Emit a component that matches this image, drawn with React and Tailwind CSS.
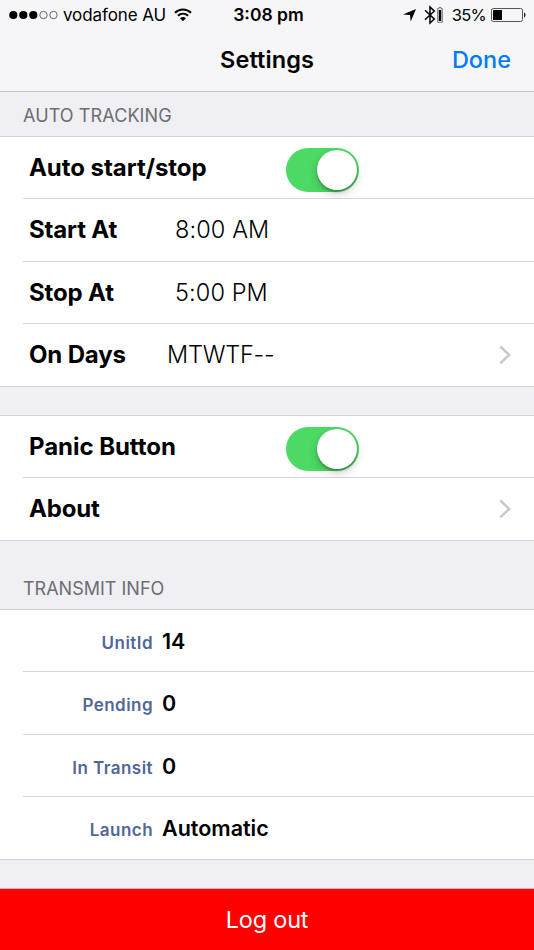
import React, { useState } from 'react';

/**
 * Status bar with carrier, clock and battery indicators.
 * @returns {JSX.Element}
 */
function StatusBar() {
  return (
    <div className="grid h-[30px] grid-cols-[1fr_auto_1fr] items-center pl-[9px] pr-[8px] text-[17px] leading-none text-black">
      <div className="flex items-center">
        <svg width="49" height="10" viewBox="0 0 49 10" fill="#000">
          <circle cx="4.3" cy="5" r="4.1" />
          <circle cx="14.3" cy="5" r="4.1" />
          <circle cx="24.3" cy="5" r="4.1" />
          <circle cx="34.5" cy="5" r="3.7" fill="none" stroke="#444" strokeWidth="0.8" />
          <circle cx="44.5" cy="5" r="3.7" fill="none" stroke="#444" strokeWidth="0.8" />
        </svg>
        <span className="ml-[5px] whitespace-nowrap tracking-[-0.1px]">vodafone AU</span>
        <svg className="ml-[8px]" width="18" height="14" viewBox="0 0 18 14" fill="none" stroke="#000" strokeWidth="2.1">
          <path d="M1 4.8 C5.6 0.4 12.4 0.4 17 4.8" />
          <path d="M3.9 7.8 C6.9 5 11.1 5 14.1 7.8" />
          <path d="M9 13.2 L6 10.3 C7.7 8.7 10.3 8.7 12 10.3 Z" fill="#000" stroke="none" />
        </svg>
      </div>
      <span className="pl-[2px] text-[17.5px] font-semibold">3:08 pm</span>
      <div className="flex items-center justify-end">
        <svg width="13" height="13" viewBox="0 0 13 13" fill="#000">
          <path d="M13 0 L7.7 12.6 L7 6 L0 5.4 Z" />
        </svg>
        <svg className="ml-[8px]" width="12" height="20" viewBox="0 0 12 20" fill="none" stroke="#000" strokeWidth="1.5">
          <path d="M1 5.2 L10.3 14 L6 18 V2 L10.3 6 L1 14.8" />
        </svg>
        <svg className="ml-[1px]" width="6" height="16" viewBox="0 0 6 16">
          <path d="M1.9 0.5 H4.1 V1.5 H5.4 V15.3 H0.6 V1.5 H1.9 Z" fill="#ddd" stroke="#777" strokeWidth="0.9" />
          <rect x="1.8" y="3" width="2.4" height="11" fill="#000" />
        </svg>
        <span className="ml-[9px] text-[16.5px] tracking-[-0.7px]">35%</span>
        <svg className="ml-[5px]" width="35" height="14" viewBox="0 0 35 14">
          <rect x="0.5" y="0.5" width="31" height="13" rx="1.8" fill="none" stroke="#555" />
          <rect x="2" y="2" width="9" height="10" fill="#000" />
          <path d="M33 4.5 C35 5 35 9 33 9.5 Z" fill="#222" />
        </svg>
      </div>
    </div>
  );
}

function Switch({ checked, onChange, label }) {
  return (
    <button
      type="button"
      role="switch"
      aria-checked={checked}
      aria-label={label}
      onClick={() => onChange(!checked)}
      className={`flex h-[44px] w-[73px] items-center rounded-full p-[2px] ${
        checked ? 'justify-end bg-[#4cd964]' : 'justify-start bg-[#e5e5ea]'
      }`}
    >
      <span className="size-[40px] rounded-full bg-white shadow-[0_4px_10px_rgba(0,0,0,0.18),0_2px_2px_rgba(0,0,0,0.25)]" />
    </button>
  );
}

function Chevron() {
  return (
    <svg width="12" height="20" viewBox="0 0 12 20" fill="none" stroke="#c7c7cc" strokeWidth="2.4">
      <path d="M1.2 1.5 L10.2 9.9 L1.2 18.3" />
    </svg>
  );
}

/**
 * Table row. The separator starts at the inset unless the row closes its group.
 * @param {{ tall: boolean, last: boolean, children: React.ReactNode }} props
 * @returns {JSX.Element}
 */
function Row({ tall, last, children }) {
  return (
    <div className={`bg-white ${last ? 'border-b border-[#d2d2d6]' : 'pl-[23px]'}`}>
      <div
        className={`flex items-center ${tall && !last ? 'h-[63px]' : 'h-[62px]'} ${
          last ? 'pb-[1px] pl-[23px]' : 'border-b border-[#d6d6d9]'
        }`}
      >
        {children}
      </div>
    </div>
  );
}

function SwitchRow({ label, checked, onChange }) {
  return (
    <Row>
      <span className="w-[257px] pl-[6px] text-[24px] font-bold tracking-[-0.05px]">{label}</span>
      <div className="ml-[6px] pt-[5px]">
        <Switch checked={checked} onChange={onChange} label={label} />
      </div>
    </Row>
  );
}

function SettingRow({ label, value, valueClass, tall, last, chevron }) {
  return (
    <Row tall={tall} last={last}>
      <div className={`flex flex-1 items-center ${last ? 'pt-[1px]' : ''}`}>
        <span className="w-[138px] pl-[6px] text-[24px] font-bold tracking-[-0.15px]">{label}</span>
        <span className={`text-[23.5px] font-[350] ${valueClass || ''}`}>{value}</span>
      </div>
      {chevron && (
        <span className="pr-[23px]">
          <Chevron />
        </span>
      )}
    </Row>
  );
}

function InfoRow({ label, value, tall, last }) {
  return (
    <Row tall={tall} last={last}>
      <div className={`flex items-baseline gap-[9px] ${last ? 'pt-[2px]' : 'pt-[1px]'}`}>
        <span className="w-[130px] text-right text-[17px] font-semibold tracking-[0.45px] text-[#51669a]">{label}</span>
        <span className="text-[21.5px] font-semibold">{value}</span>
      </div>
    </Row>
  );
}

export default function App() {
  const [autoTrack, setAutoTrack] = useState(true);
  const [panic, setPanic] = useState(true);

  return (
    <div className="flex h-[950px] w-[534px] flex-col overflow-hidden bg-[#efeff4] font-['Inter',sans-serif] text-black">
      <header className="h-[92px] border-b border-[#c3c3c8] bg-[#f6f6f8]">
        <StatusBar />
        <div className="grid h-[60px] grid-cols-[1fr_auto_1fr] items-center px-[23px] text-[23.5px]">
          <span />
          <h1 className="font-semibold tracking-[0.1px]">Settings</h1>
          <button type="button" className="justify-self-end font-medium text-[#007aff]">
            Done
          </button>
        </div>
      </header>

      <h2 className="flex h-[45px] items-center border-b border-[#d2d2d6] pl-[23px] pt-[3px] text-[18px] tracking-[0.1px] text-[#6d6d72]">
        AUTO TRACKING
      </h2>
      <SwitchRow label="Auto start/stop" checked={autoTrack} onChange={setAutoTrack} />
      <SettingRow label="Start At" value="8:00 AM" valueClass="pl-[14px] tracking-[0.1px]" tall />
      <SettingRow label="Stop At" value="5:00 PM" valueClass="pl-[14px] tracking-[0.1px]" />
      <SettingRow label="On Days" value="MTWTF--" valueClass="pl-[6px] tracking-[-0.2px]" tall last chevron />

      <div className="h-[29px] border-b border-[#d2d2d6]" />
      <SwitchRow label="Panic Button" checked={panic} onChange={setPanic} />
      <SettingRow label="About" tall last chevron />

      <h2 className="flex h-[69px] items-end border-b border-[#d2d2d6] pb-[7px] pl-[23px] text-[18px] text-[#6d6d72]">
        TRANSMIT INFO
      </h2>
      <InfoRow label="UnitId" value="14" />
      <InfoRow label="Pending" value="0" tall />
      <InfoRow label="In Transit" value="0" />
      <InfoRow label="Launch" value="Automatic" tall last />

      <button
        type="button"
        className="mt-[28px] h-[62px] border-t border-[#b8b8bd] bg-[#ff0000] text-[23.5px] tracking-[-0.2px] text-white"
      >
        Log out
      </button>
    </div>
  );
}
